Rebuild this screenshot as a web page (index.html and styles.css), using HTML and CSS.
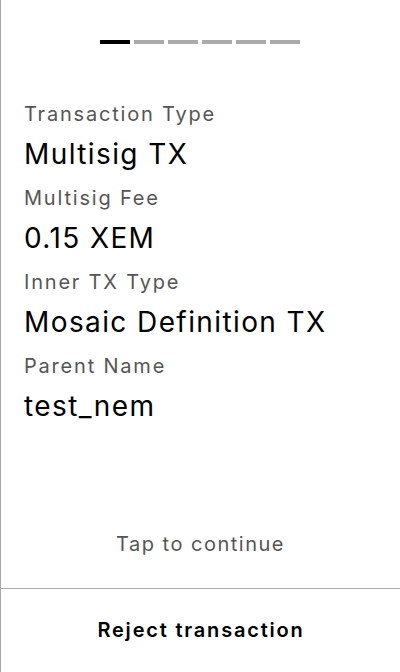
FILE: index.html
```html
<!DOCTYPE html>
<html lang="en">
<head>
<meta charset="utf-8">
<title>Transaction</title>
<link rel="stylesheet" href="styles.css">
</head>
<body>
<div class="screen">
  <div class="main">
    <div class="progress">
      <span class="seg active"></span>
      <span class="seg"></span>
      <span class="seg"></span>
      <span class="seg"></span>
      <span class="seg"></span>
      <span class="seg"></span>
    </div>
    <div class="fields">
      <div class="label">Transaction Type</div>
      <div class="value">Multisig TX</div>
      <div class="label">Multisig Fee</div>
      <div class="value">0.15 XEM</div>
      <div class="label">Inner TX Type</div>
      <div class="value">Mosaic Definition TX</div>
      <div class="label">Parent Name</div>
      <div class="value">test_nem</div>
    </div>
    <div class="tap">Tap to continue</div>
  </div>
  <div class="footer">Reject transaction</div>
</div>
</body>
</html>
```

FILE: styles.css
```css
html, body {
  margin: 0;
  padding: 0;
  background: #ffffff;
}
body {
  font-family: Inter, "Noto Sans", sans-serif;
  color: #000000;
}
.screen {
  height: 672px;
  box-sizing: border-box;
  border-left: 1px solid #a8a8a8;
  display: flex;
  flex-direction: column;
}
.main {
  flex: 1;
  display: flex;
  flex-direction: column;
  padding-bottom: 30px;
}
.progress {
  display: flex;
  justify-content: center;
  gap: 4px;
  padding-top: 40px;
  margin-left: -1px;
}
.seg {
  width: 30px;
  height: 4px;
  background: #aaaaaa;
}
.seg.active {
  background: #000000;
}
.fields {
  padding: 0 23px;
  margin-top: 56px;
  flex: 1;
}
.label {
  font-size: 20px;
  line-height: 28px;
  letter-spacing: 1.8px;
  color: #555555;
  margin-bottom: 8px;
}
.value {
  font-size: 28px;
  line-height: 36px;
  letter-spacing: 1.4px;
  color: #000000;
  margin-bottom: 12px;
}
.tap {
  font-size: 20px;
  line-height: 28px;
  letter-spacing: 1.5px;
  color: #555555;
  text-align: center;
  margin-left: -1px;
  padding-left: 1px;
}
.footer {
  height: 84px;
  box-sizing: border-box;
  border-top: 1px solid #aaaaaa;
  display: flex;
  align-items: center;
  justify-content: center;
  padding-bottom: 2px;
  padding-left: 2px;
  font-size: 20px;
  font-weight: 600;
  letter-spacing: 1.8px;
  margin-left: -1px;
}
```
